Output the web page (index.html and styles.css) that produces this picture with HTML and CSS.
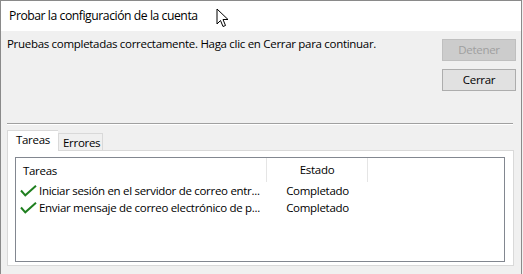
FILE: index.html
```html
<!DOCTYPE html>
<html lang="es">
<head>
<meta charset="utf-8">
<link rel="stylesheet" href="styles.css">
</head>
<body>
<div class="window">
  <div class="titlebar"><span class="title">Probar la configuración de la cuenta</span></div>
  <div class="top">
    <div class="message">Pruebas completadas correctamente. Haga clic en Cerrar para continuar.</div>
    <div class="buttons">
      <div class="btn disabled">Detener</div>
      <div class="btn">Cerrar</div>
    </div>
  </div>
  <div class="separator"></div>
  <div class="tabs">
    <div class="tab active">Tareas</div>
    <div class="tab">Errores</div>
  </div>
  <div class="panel">
    <div class="list">
      <div class="row header">
        <div class="col1">Tareas</div>
        <div class="col2">Estado</div>
        <div class="col3"></div>
      </div>
      <div class="row item">
        <div class="col1"><svg class="check" width="17" height="12" viewBox="0 0 17 12"><path d="M1 5.5 L5.3 10.3 L16 0.8" fill="none" stroke="#1f7f1f" stroke-width="2"/></svg><span class="label">Iniciar sesión en el servidor de correo entr...</span></div>
        <div class="col2">Completado</div>
      </div>
      <div class="row item">
        <div class="col1"><svg class="check" width="17" height="12" viewBox="0 0 17 12"><path d="M1 5.5 L5.3 10.3 L16 0.8" fill="none" stroke="#1f7f1f" stroke-width="2"/></svg><span class="label">Enviar mensaje de correo electrónico de p...</span></div>
        <div class="col2">Completado</div>
      </div>
    </div>
  </div>
  <svg class="cursor" width="14" height="21" viewBox="0 0 14 21"><path d="M1 1 L1 16 L4.5 12.5 L7 18.5 L9.5 17.5 L7 11.5 L12 11.5 Z" fill="#fff" stroke="#000" stroke-width="1" stroke-linejoin="miter"/></svg>
</div>
</body>
</html>
```
FILE: styles.css
```css
* { box-sizing: border-box; }
html, body { margin: 0; padding: 0; }
body {
  width: 523px;
  height: 274px;
  overflow: hidden;
  background: #f0f0f0;
  font-family: "Open Sans", "Noto Sans", sans-serif;
  font-size: 11.5px;
  letter-spacing: -0.3px;
  color: #000;
}
.window {
  position: relative;
  width: 522px;
  height: 274px;
  border: 1px solid #8a8a8a;
  border-bottom: none;
  background: #f0f0f0;
  display: flex;
  flex-direction: column;
}
.titlebar {
  height: 30px;
  background: #fff;
  padding-left: 8px;
  line-height: 29px;
  font-size: 12.2px;
  letter-spacing: -0.45px;
}
.top {
  height: 92px;
  display: flex;
  justify-content: space-between;
}
.message {
  padding: 5px 0 0 6px;
  line-height: 16px;
}
.buttons {
  display: flex;
  flex-direction: column;
  gap: 8px;
  padding-top: 8px;
  margin-right: 5px;
}
.btn {
  width: 74px;
  height: 22px;
  border: 1px solid #adadad;
  background: #e1e1e1;
  text-align: center;
  line-height: 20px;
}
.btn.disabled {
  background: #cccccc;
  border-color: #bfbfbf;
  color: #9f9f9f;
}
.separator {
  height: 2px;
  margin: 0 8px 0 6px;
  border-top: 1px solid #a0a0a0;
  border-bottom: 1px solid #fff;
}
.tabs {
  height: 25px;
  padding: 3px 0 0 6px;
  display: flex;
  align-items: flex-end;
}
.tab {
  height: 17px;
  width: 45px;
  padding: 0 0 0 4px;
  border: 1px solid #d9d9d9;
  border-bottom: none;
  background: #f0f0f0;
  line-height: 17px;
}
.tab.active {
  height: 21px;
  background: #fff;
  padding: 0 0 0 8px;
  width: 51px;
  line-height: 17px;
  border-right: none;
  position: relative;
  z-index: 1;
  margin-bottom: -1px;
}
.panel {
  margin: 0 7px 0 6px;
  height: 116px;
  border: 1px solid #d9d9d9;
  background: #fff;
  padding: 6px 8px 3px 7px;
}
.list {
  height: 105px;
  border: 1px solid #828790;
  background: #fff;
}
.row {
  display: flex;
  white-space: nowrap;
}
.row.header {
  height: 24px;
  line-height: 23px;
}
.row.header .col1 { padding-left: 7px; }
.row.header .col1, .row.header .col2 {
  border-right: 1px solid #e5e5e5;
}
.row.item {
  height: 17px;
  line-height: 17px;
}
.col1 {
  width: 251px;
  display: flex;
  align-items: center;
}
.col2 {
  width: 101px;
  text-align: center;
}
.check {
  margin: 0 2px 0 4px;
  flex: none;
}
.cursor {
  position: absolute;
  left: 215px;
  top: 7px;
}
```
